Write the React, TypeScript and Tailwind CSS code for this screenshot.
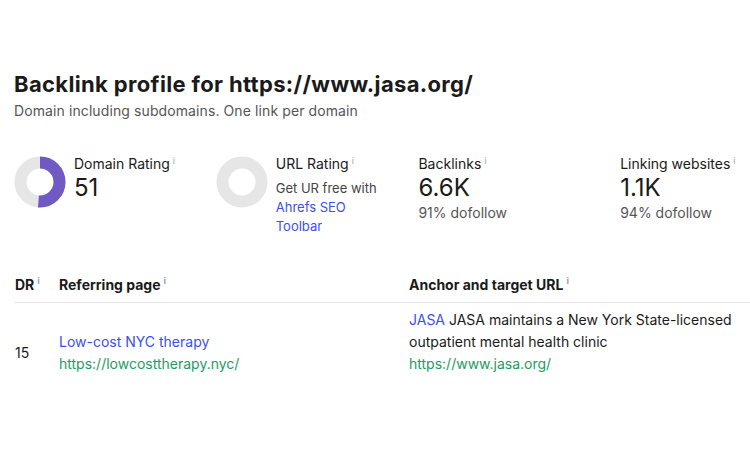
import React from 'react';

const Info: React.FC = () => (
  <span className="ml-[3px] align-top text-[9px] leading-none text-gray-400 relative top-[1px]">i</span>
);

const Donut: React.FC<{ value: number }> = ({ value }) => {
  const r = 19.5;
  const c = 2 * Math.PI * r;
  return (
    <svg width="52" height="52" viewBox="0 0 52 52" className="shrink-0">
      <circle cx="26" cy="26" r={r} fill="none" stroke="#e6e6e6" strokeWidth="12" />
      {value > 0 && (
        <circle
          cx="26"
          cy="26"
          r={r}
          fill="none"
          stroke="#7059c2"
          strokeWidth="12"
          strokeDasharray={`${(c * value) / 100} ${c}`}
          transform="rotate(-90 26 26)"
        />
      )}
    </svg>
  );
};

const App: React.FC = () => {
  return (
    <div className="w-[750px] h-[450px] bg-white overflow-hidden font-['Inter',sans-serif] text-[#1a1a1a]">
      <div className="pl-[14px] pt-[70px]">
        <h1 className="text-[22px] leading-[28px] font-bold tracking-[0.35px]">Backlink profile for https://www.jasa.org/</h1>
        <p className="text-[14px] leading-[20px] text-[#555] mt-[3px] tracking-[0.1px]">Domain including subdomains. One link per domain</p>

        <div className="flex mt-[34px]">
          <div className="w-[202px] flex gap-[8px]">
            <div className="pt-[1px]"><Donut value={51} /></div>
            <div>
              <div className="text-[14px] leading-[18px]">Domain Rating<Info /></div>
              <div className="text-[24px] leading-[30px]">51</div>
            </div>
          </div>
          <div className="w-[203px] flex gap-[8px]">
            <div className="pt-[1px]"><Donut value={0} /></div>
            <div>
              <div className="text-[14px] leading-[18px]">URL Rating<Info /></div>
              <div className="text-[13px] leading-[19px] mt-[6px] text-[#444]">
                Get UR free with<br />
                <span className="text-[#3b4ef5]">Ahrefs SEO<br />Toolbar</span>
              </div>
            </div>
          </div>
          <div className="w-[202px]">
            <div className="text-[14px] leading-[18px]">Backlinks<Info /></div>
            <div className="text-[24px] leading-[30px]">6.6K</div>
            <div className="text-[14px] leading-[20px] text-[#555]">91% dofollow</div>
          </div>
          <div className="w-[130px]">
            <div className="text-[14px] leading-[18px] whitespace-nowrap">Linking websites<Info /></div>
            <div className="text-[24px] leading-[30px]">1.1K</div>
            <div className="text-[14px] leading-[20px] text-[#555]">94% dofollow</div>
          </div>
        </div>

        <div className="mt-[39px]">
          <div className="flex border-b border-[#e8e8e8] pb-[7px] text-[14px] leading-[20px] font-bold">
            <div className="w-[45px] pl-[1px]">DR<Info /></div>
            <div className="w-[350px]">Referring page<Info /></div>
            <div className="flex-1">Anchor and target URL<Info /></div>
          </div>
          <div className="flex items-end text-[14px] leading-[22px] pt-[6px]">
            <div className="flex items-center">
              <div className="w-[45px] pl-[1px]">15</div>
              <div className="w-[350px]">
                <div className="text-[#3b4ef5]">Low-cost NYC therapy</div>
                <div className="text-[#1e9b62]">https://lowcosttherapy.nyc/</div>
              </div>
            </div>
            <div className="flex-1">
              <div><span className="text-[#3b4ef5]">JASA</span> JASA maintains a New York State-licensed</div>
              <div>outpatient mental health clinic</div>
              <div className="text-[#1e9b62]">https://www.jasa.org/</div>
            </div>
          </div>
        </div>
      </div>
    </div>
  );
};

export default App;
